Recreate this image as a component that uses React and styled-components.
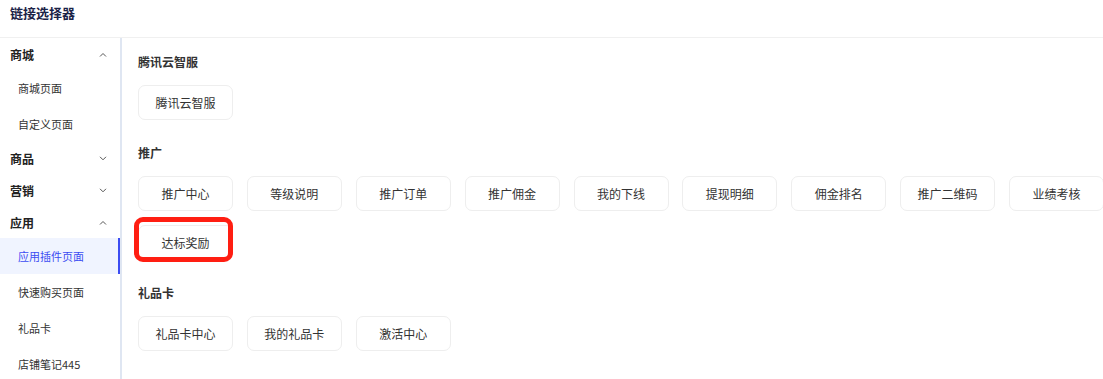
import React from "react";
import styled, { createGlobalStyle } from "styled-components";

const GlobalStyle = createGlobalStyle`
  body {
    margin: 0;
    background: #fff;
    font-family: "Noto Sans CJK SC", "Noto Sans", sans-serif;
    color: #333;
  }
`;

const menu = [
  { title: "商城", open: true, items: ["商城页面", "自定义页面"] },
  { title: "商品", open: false, items: [] },
  { title: "营销", open: false, items: [] },
  {
    title: "应用",
    open: true,
    items: ["应用插件页面", "快速购买页面", "礼品卡", "店铺笔记445"],
  },
];

const sections = [
  { title: "腾讯云智服", links: ["腾讯云智服"] },
  {
    title: "推广",
    links: [
      "推广中心",
      "等级说明",
      "推广订单",
      "推广佣金",
      "我的下线",
      "提现明细",
      "佣金排名",
      "推广二维码",
      "业绩考核",
      "达标奖励",
    ],
  },
  { title: "礼品卡", links: ["礼品卡中心", "我的礼品卡", "激活中心"] },
];

const Chevron = ({ up }) => (
  <svg width="8" height="5" viewBox="0 0 8 5">
    <polyline
      points={up ? "1,4.5 4,1.5 7,4.5" : "1,0.8 4,3.8 7,0.8"}
      fill="none"
      stroke="#555"
      strokeWidth="1"
    />
  </svg>
);

const App = () => {
  return (
    <Page>
      <GlobalStyle />
      <Header>链接选择器</Header>
      <Body>
        <Sidebar>
          {menu.map((group) => (
            <div key={group.title}>
              <GroupHead>
                {group.title}
                <Chevron up={group.open} />
              </GroupHead>
              {group.items.map((item) => (
                <MenuItem key={item} $active={item === "应用插件页面"}>
                  {item}
                </MenuItem>
              ))}
            </div>
          ))}
        </Sidebar>
        <Main>
          {sections.map((s) => (
            <Section key={s.title}>
              <SectionTitle>{s.title}</SectionTitle>
              <LinkGrid>
                {s.links.map((l) => (
                  <LinkButton key={l}>
                    {l}
                    {l === "达标奖励" && <Marker />}
                  </LinkButton>
                ))}
              </LinkGrid>
            </Section>
          ))}
        </Main>
      </Body>
    </Page>
  );
};

const Page = styled.div`
  width: 1103px;
  height: 379px;
  overflow: hidden;
`;

const Header = styled.div`
  height: 38px;
  box-sizing: border-box;
  padding: 4px 10px 0;
  font-size: 13px;
  line-height: 18px;
  font-weight: 700;
  color: #1b2347;
  border-bottom: 1px solid #f0f0f0;
`;

const Body = styled.div`
  display: flex;
`;

const Sidebar = styled.div`
  width: 120px;
  flex-shrink: 0;
  border-right: 2px solid #dfe6f2;
`;

const GroupHead = styled.div`
  height: 32px;
  display: flex;
  align-items: center;
  justify-content: space-between;
  padding: 0 13px 0 10px;
  font-size: 12px;
  font-weight: 700;
  color: #222;
`;

const MenuItem = styled.div`
  height: 36px;
  display: flex;
  align-items: center;
  padding-left: 18px;
  font-size: 11px;
  color: ${(p) => (p.$active ? "#3c4cf2" : "#333")};
  background: ${(p) => (p.$active ? "#f0f4ff" : "transparent")};
  box-shadow: ${(p) => (p.$active ? "inset -2px 0 0 #3c4cf2" : "none")};
`;

const Main = styled.div`
  flex: 1;
  min-width: 0;
  padding: 16px 0 0 16px;
  display: flex;
  flex-direction: column;
  gap: 25px;
`;

const Section = styled.div``;

const SectionTitle = styled.div`
  font-size: 12px;
  line-height: 16px;
  font-weight: 700;
  color: #333;
  margin-bottom: 15px;
`;

const LinkGrid = styled.div`
  display: flex;
  flex-wrap: wrap;
  width: 980px;
  row-gap: 14px;
  column-gap: 13.875px;
`;

const LinkButton = styled.div`
  position: relative;
  width: 95px;
  height: 35px;
  box-sizing: border-box;
  border: 1px solid #eeeeee;
  border-radius: 7px;
  display: flex;
  align-items: center;
  justify-content: center;
  font-size: 12px;
  color: #333;
`;

const Marker = styled.span`
  position: absolute;
  left: -5px;
  top: -9px;
  right: -1px;
  bottom: -3px;
  border: 5px solid #ff1e12;
  border-radius: 9px;
`;

export default App;
